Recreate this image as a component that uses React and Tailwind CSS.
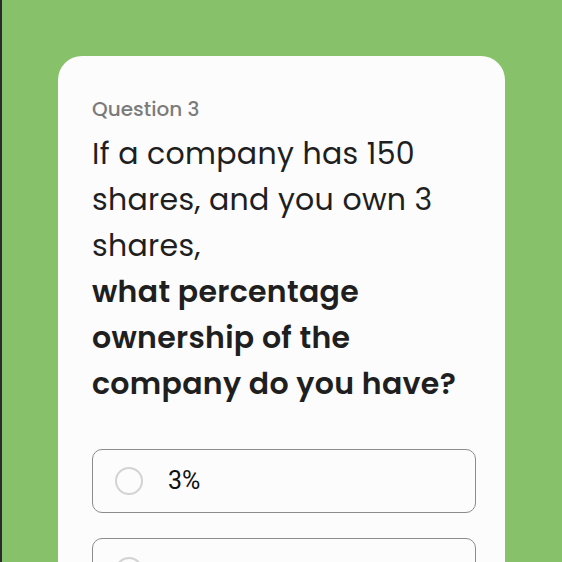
export default function App() {
  const poppins = { fontFamily: '"Poppins", "Open Sans", "Noto Sans", sans-serif' };
  return (
    <div className="w-[562px] h-[562px] overflow-hidden bg-[#87c26a] border-l-2 border-[#2a2a2a] pl-[56px] pr-[57px] pt-[56px]">
      <div className="bg-[#fcfcfc] rounded-t-[24px] h-[600px] pl-[34px] pr-[20px] pt-[39px]" style={poppins}>
        <div className="text-[20px] leading-[28px] font-medium text-[#7b7b7b]">Question 3</div>
        <div className="mt-[8px] text-[30px] leading-[46px] tracking-[0.3px] text-[#1f1f1f]">
          If a company has 150 shares, and you own 3 shares,
          <br />
          <span className="font-semibold">what percentage ownership of the company do you have?</span>
        </div>
        <div className="mt-[42px] mr-[9px] flex flex-col gap-[25px]" style={{ fontFamily: 'Roboto, "Liberation Sans", sans-serif' }}>
          {["3%"].map((t) => (
            <div key={t} className="h-[64px] rounded-[10px] border border-[#8c8c8c] flex items-center pl-[22px]">
              <div className="w-[28px] h-[28px] rounded-full border-2 border-[#d3d3d3]" />
              <div className="ml-[25px] text-[25px] text-[#111]">{t}</div>
            </div>
          ))}
          <div className="h-[64px] rounded-[10px] border border-[#8c8c8c] flex items-start pt-[18px] pl-[22px]">
            <div className="w-[28px] h-[28px] rounded-full border-2 border-[#d3d3d3]" />
          </div>
        </div>
      </div>
    </div>
  );
}
